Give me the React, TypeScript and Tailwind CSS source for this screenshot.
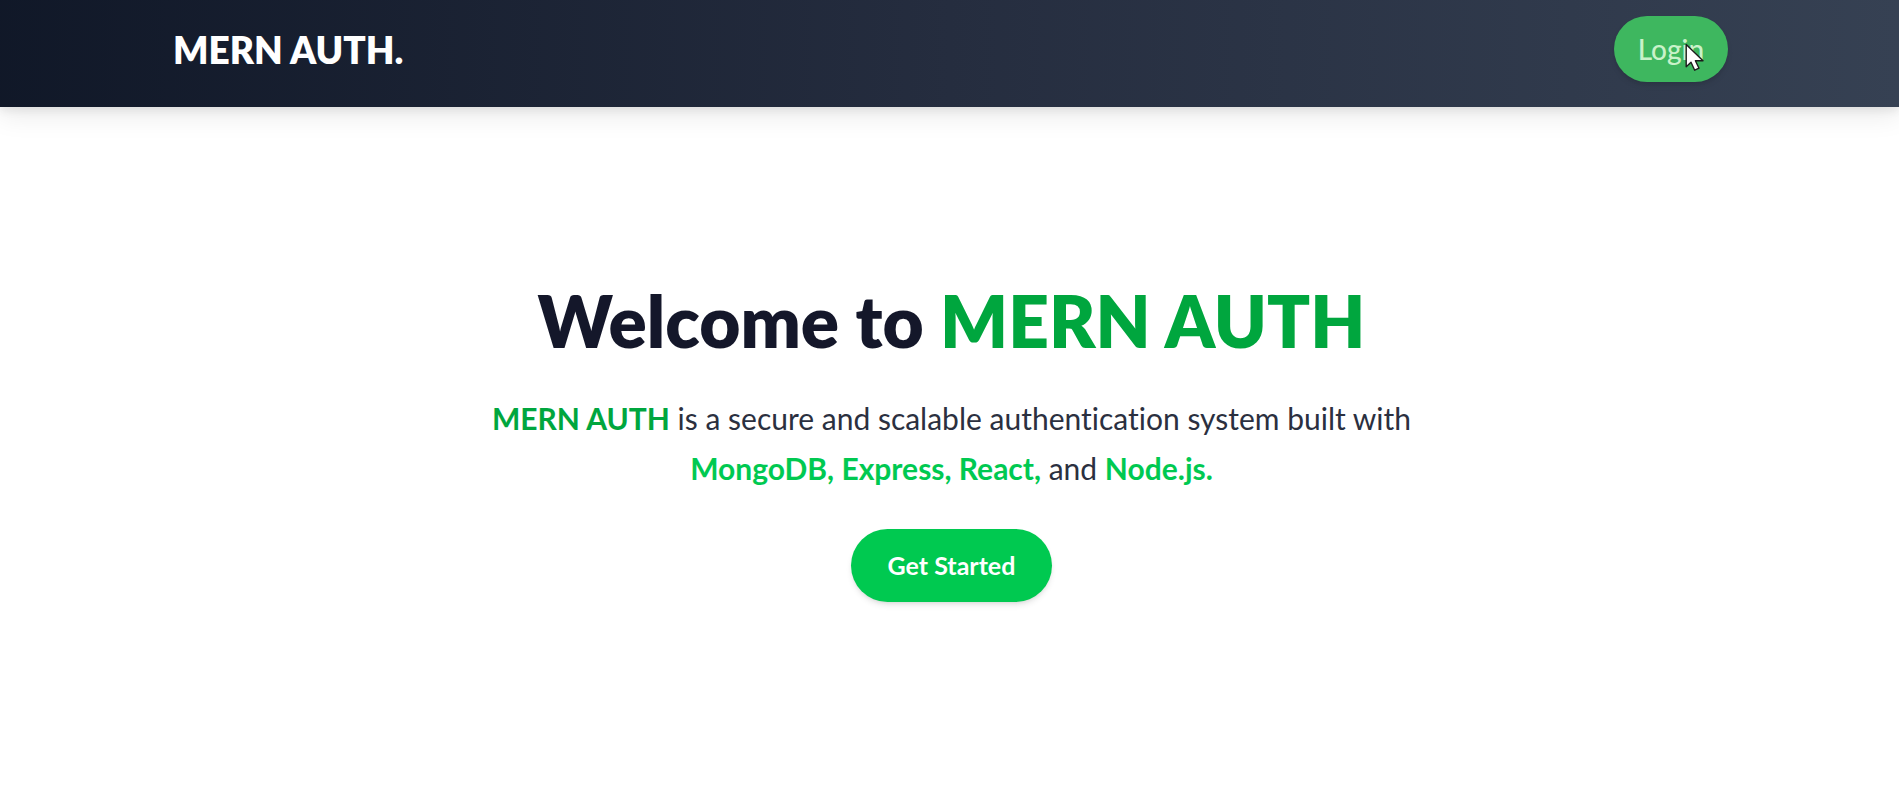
export default function App() {
  return (
    <div className="min-h-screen bg-white font-['Lato','Open_Sans',sans-serif] [font-variant-ligatures:no-common-ligatures]">
      <header className="bg-linear-to-r from-gray-900 via-[#252d3f] to-[#364153] shadow-[0_10px_24px_0_rgba(0,0,0,0.08),0_4px_8px_0_rgba(0,0,0,0.07)]">
        <nav className="mx-auto flex h-[107px] w-[82%] items-start justify-between pt-4 pl-0.5">
          <a href="#" className="flex h-[68px] items-center text-[37px] font-extrabold text-white">
            MERN AUTH.
          </a>
          <div className="relative">
            <button
              type="button"
              className="h-[66px] cursor-pointer rounded-full bg-[#3eb75f] px-6 text-[28px] font-medium text-[#c9f2c9] shadow-md"
            >
              Login
            </button>
            <svg
              aria-hidden="true"
              viewBox="0 0 20 29"
              className="pointer-events-none absolute top-[27px] left-[71px] h-[29px] w-5"
            >
              <path
                d="M1.2 1.5V23.8L6 19.3L9.7 27.2L14 25.2L10.4 17.7H18Z"
                fill="#fff"
                stroke="#1c1c1c"
                strokeWidth="1.4"
                strokeLinejoin="round"
              />
            </svg>
          </div>
        </nav>
      </header>

      <main className="flex flex-col items-center pt-[168px] pr-6 pl-7 text-center">
        <h1 className="text-[71px] leading-[92px] font-extrabold text-[#14172a]">
          Welcome to <span className="text-green-600">MERN AUTH</span>
        </h1>
        <p className="mt-[26px] max-w-[960px] text-[30px] leading-[50px] text-[#2b3040]">
          <span className="font-bold text-green-600">MERN AUTH</span> is a secure and scalable
          authentication system built with{" "}
          <span className="font-bold text-green-500">MongoDB, Express, React,</span> and{" "}
          <span className="font-bold text-green-500">Node.js.</span>
        </p>
        <button
          type="button"
          className="mt-9 h-[73px] cursor-pointer rounded-full bg-[#00c950] px-[37px] text-[25px] font-bold text-white shadow-md"
        >
          Get Started
        </button>
      </main>
    </div>
  );
}
